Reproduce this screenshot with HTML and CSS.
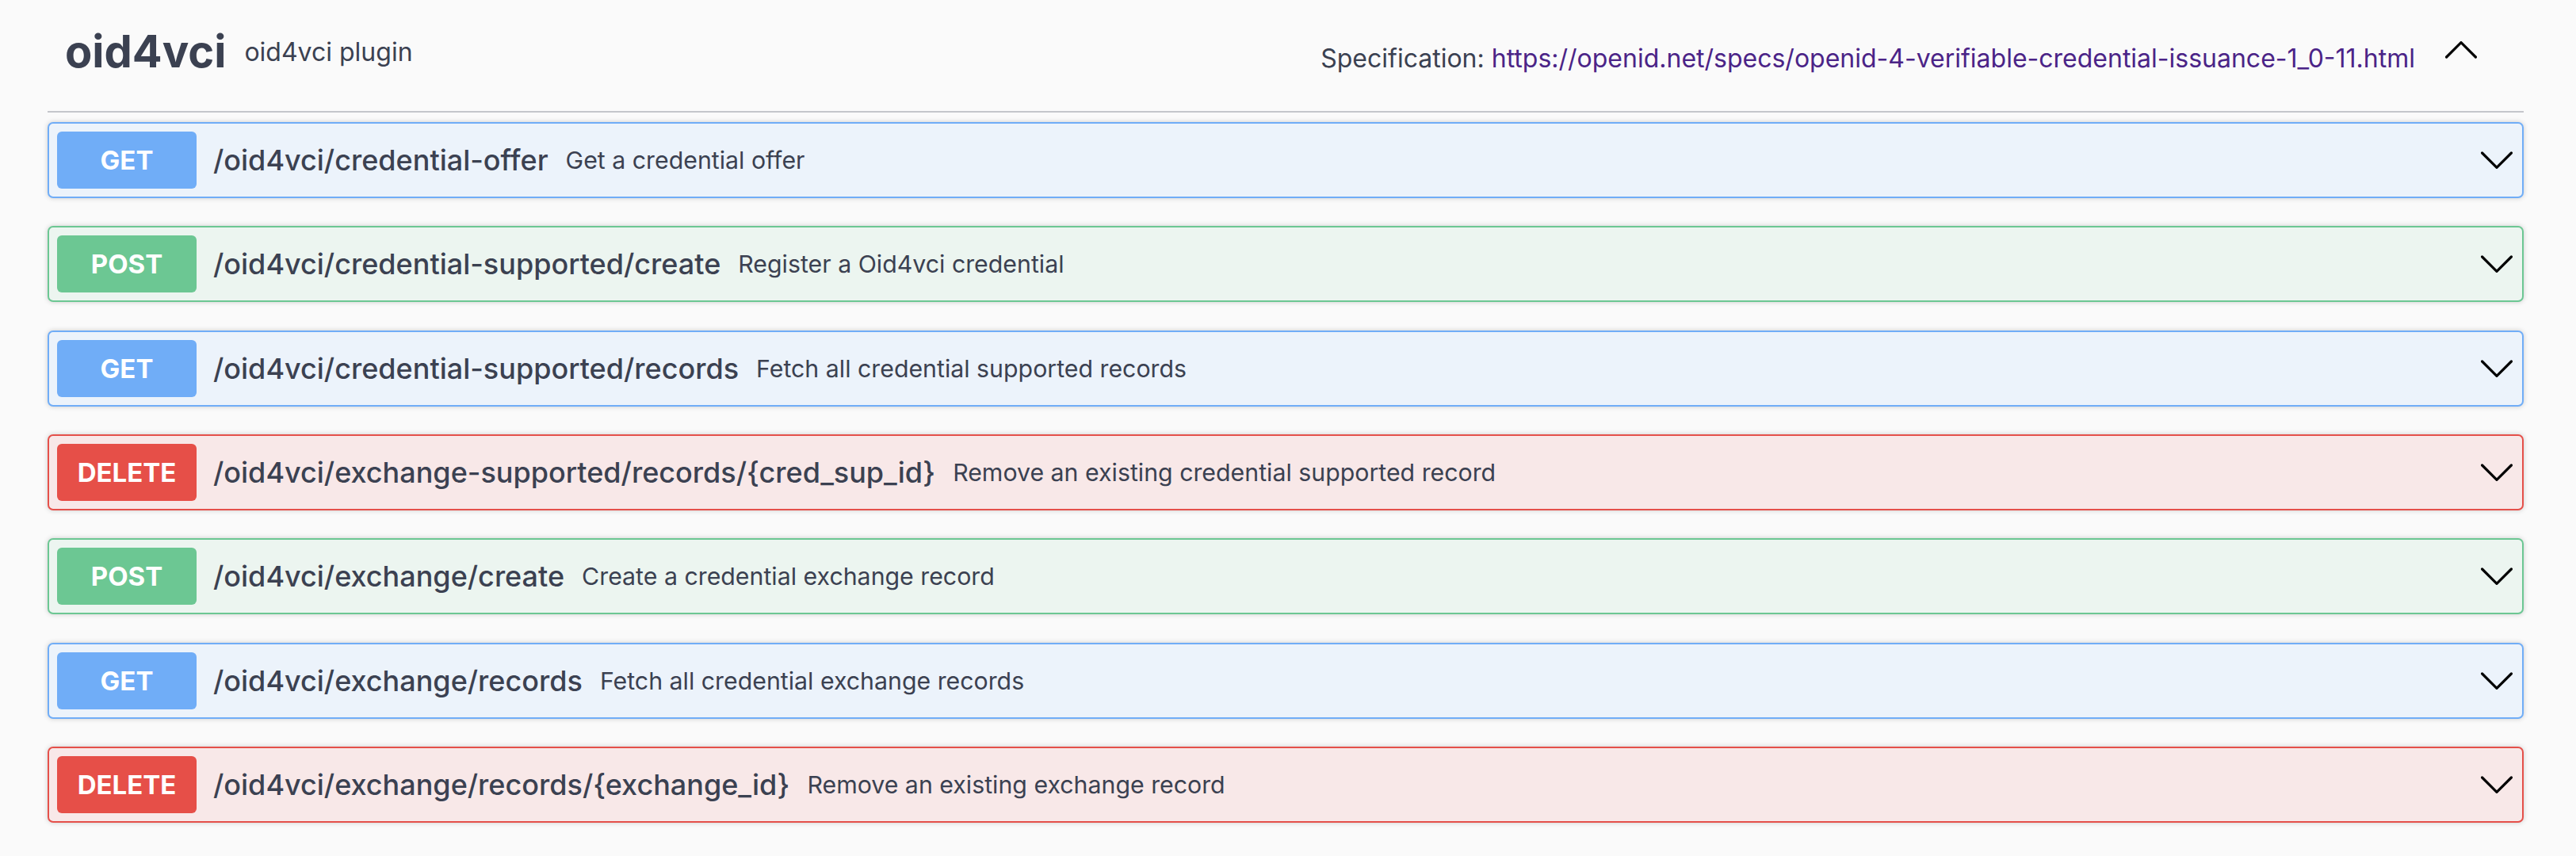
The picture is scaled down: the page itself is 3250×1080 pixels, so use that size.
FILE: index.html
```html
<!DOCTYPE html>
<html>
  <head>
    <meta charset="utf-8">
    <link rel="stylesheet" href="styles.css">
  </head>
  <body>
    <div class='wrapper'>
      <div class='tag'>
        <h3>oid4vci</h3>
        <small>oid4vci plugin</small>
        <div class='docs'>Specification: <a href='#'>https://openid.net/specs/openid-4-verifiable-credential-issuance-1_0-11.html</a></div>
        <svg class='arrow up' viewBox='0 0 40 22' width='40' height='22'><polyline points='1.6,20 20,1.6 38.4,20'/></svg>
      </div>
      <div class='ops'>
        <div class='op get'>
          <span class='method'>GET</span>
          <span class='path'>/oid4vci/credential-offer</span>
          <span class='desc'>Get a credential offer</span>
          <svg class='arrow' viewBox='0 0 40 22' width='40' height='22'><polyline points='1.6,2 20,20.4 38.4,2'/></svg>
        </div>
        <div class='op post'>
          <span class='method'>POST</span>
          <span class='path'>/oid4vci/credential-supported/create</span>
          <span class='desc'>Register a Oid4vci credential</span>
          <svg class='arrow' viewBox='0 0 40 22' width='40' height='22'><polyline points='1.6,2 20,20.4 38.4,2'/></svg>
        </div>
        <div class='op get'>
          <span class='method'>GET</span>
          <span class='path'>/oid4vci/credential-supported/records</span>
          <span class='desc'>Fetch all credential supported records</span>
          <svg class='arrow' viewBox='0 0 40 22' width='40' height='22'><polyline points='1.6,2 20,20.4 38.4,2'/></svg>
        </div>
        <div class='op delete'>
          <span class='method'>DELETE</span>
          <span class='path'>/oid4vci/exchange-supported/records/{cred_sup_id}</span>
          <span class='desc'>Remove an existing credential supported record</span>
          <svg class='arrow' viewBox='0 0 40 22' width='40' height='22'><polyline points='1.6,2 20,20.4 38.4,2'/></svg>
        </div>
        <div class='op post'>
          <span class='method'>POST</span>
          <span class='path'>/oid4vci/exchange/create</span>
          <span class='desc'>Create a credential exchange record</span>
          <svg class='arrow' viewBox='0 0 40 22' width='40' height='22'><polyline points='1.6,2 20,20.4 38.4,2'/></svg>
        </div>
        <div class='op get'>
          <span class='method'>GET</span>
          <span class='path'>/oid4vci/exchange/records</span>
          <span class='desc'>Fetch all credential exchange records</span>
          <svg class='arrow' viewBox='0 0 40 22' width='40' height='22'><polyline points='1.6,2 20,20.4 38.4,2'/></svg>
        </div>
        <div class='op delete'>
          <span class='method'>DELETE</span>
          <span class='path'>/oid4vci/exchange/records/{exchange_id}</span>
          <span class='desc'>Remove an existing exchange record</span>
          <svg class='arrow' viewBox='0 0 40 22' width='40' height='22'><polyline points='1.6,2 20,20.4 38.4,2'/></svg>
        </div>
      </div>
    </div>
  </body>
</html>
```

FILE: styles.css
```css
body {
  margin: 0;
  background: #fafafa;
  font-family: Inter, "Noto Sans", sans-serif;
  color: #3b4151;
}
.wrapper {
  margin-left: 60px;
  width: 3124px;
}

.tag {
  display: flex;
  align-items: center;
  height: 66px;
  padding: 32px 59px 42px 22px;
  border-bottom: 2px solid #c4c6cb;
}
.tag h3 {
  margin: 0;
  font-size: 56px;
  font-weight: 700;
  line-height: 66px;
}
.tag small {
  flex: 1;
  font-size: 32px;
  padding-left: 23px;
}
.docs {
  font-size: 32px;
  padding-top: 16px;
}
.docs a {
  color: #4b2487;
  text-decoration: none;
}

.arrow {
  flex: none;
  fill: none;
  stroke: #000;
  stroke-width: 3.2;
  stroke-linecap: round;
  stroke-linejoin: round;
}
.arrow.up {
  margin-left: 38px;
  margin-bottom: 4px;
}

.ops {
  padding-top: 12px;
}
.op {
  display: flex;
  align-items: center;
  height: 72px;
  padding: 10px;
  border: 2px solid;
  border-radius: 7px;
  margin-bottom: 35.33px;
  box-shadow: 0 0 6px rgba(0, 0, 0, .19);
}
.method {
  flex: none;
  width: 176px;
  height: 72px;
  display: flex;
  align-items: center;
  justify-content: center;
  border-radius: 6px;
  color: #fff;
  font-size: 33px;
  font-weight: 700;
}
.path {
  padding-left: 21px;
  font-size: 36px;
  font-weight: 500;
}
.desc {
  flex: 1;
  padding-left: 22px;
  font-size: 30.3px;
}
.op .arrow {
  margin-right: 2px;
}

.get {
  background: #ecf3fb;
  border-color: #70adf7;
}
.get .method {
  background: #70adf7;
}
.post {
  background: #ecf5f0;
  border-color: #6cc793;
}
.post .method {
  background: #6cc793;
}
.delete {
  background: #f8e8e8;
  border-color: #e5504a;
}
.delete .method {
  background: #e64f48;
}
```
